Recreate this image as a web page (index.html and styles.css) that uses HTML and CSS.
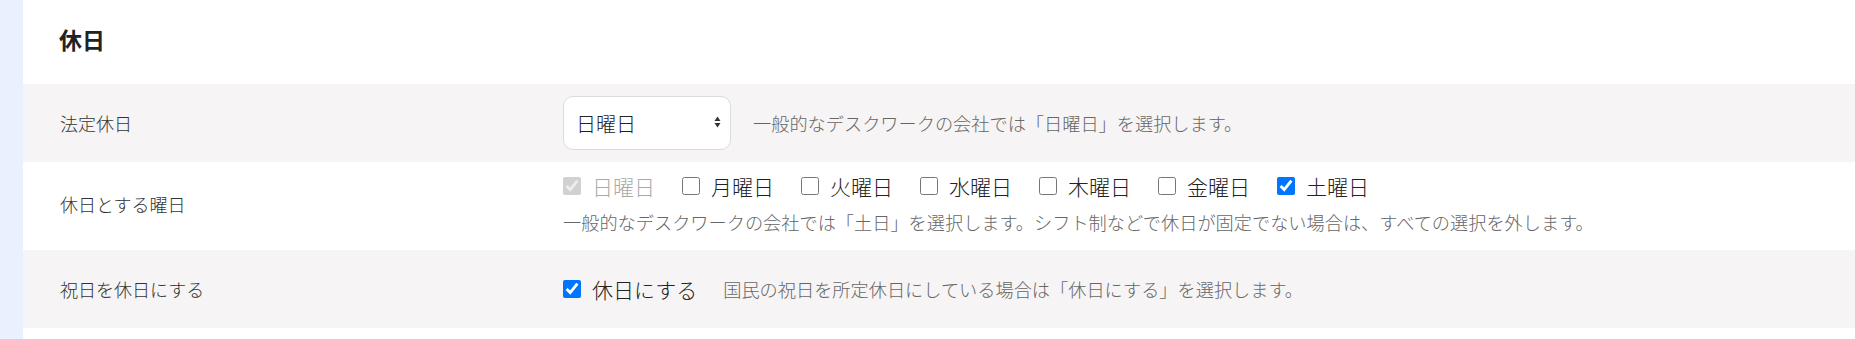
FILE: index.html
```html
<!DOCTYPE html>
<html lang="ja">
<head>
<meta charset="utf-8">
<title>休日</title>
<link rel="stylesheet" href="styles.css">
</head>
<body>
<div class="layout">
  <aside class="side"></aside>
  <main class="main">
    <h2 class="section-title">休日</h2>

    <div class="row row-alt">
      <div class="row-label">法定休日</div>
      <div class="row-control inline">
        <div class="select-wrap">
          <select class="select">
            <option selected>日曜日</option>
            <option>月曜日</option>
            <option>火曜日</option>
            <option>水曜日</option>
            <option>木曜日</option>
            <option>金曜日</option>
            <option>土曜日</option>
          </select>
          <svg class="select-arrows" width="7" height="12" viewBox="0 0 7 12" aria-hidden="true">
            <path d="M3.5 0.5 L6.5 5 L0.5 5 Z" fill="#333"/>
            <path d="M3.5 11.5 L6.5 7 L0.5 7 Z" fill="#333"/>
          </svg>
        </div>
        <span class="help">一般的なデスクワークの会社では「日曜日」を選択します。</span>
      </div>
    </div>

    <div class="row row-tall">
      <div class="row-label">休日とする曜日</div>
      <div class="row-control">
        <div class="checks">
          <label class="check disabled"><input type="checkbox" checked disabled><span>日曜日</span></label>
          <label class="check"><input type="checkbox"><span>月曜日</span></label>
          <label class="check"><input type="checkbox"><span>火曜日</span></label>
          <label class="check"><input type="checkbox"><span>水曜日</span></label>
          <label class="check"><input type="checkbox"><span>木曜日</span></label>
          <label class="check"><input type="checkbox"><span>金曜日</span></label>
          <label class="check"><input type="checkbox" checked><span>土曜日</span></label>
        </div>
        <div class="help help-block">一般的なデスクワークの会社では「土日」を選択します。シフト制などで休日が固定でない場合は、すべての選択を外します。</div>
      </div>
    </div>

    <div class="row row-alt">
      <div class="row-label">祝日を休日にする</div>
      <div class="row-control inline">
        <label class="check"><input type="checkbox" checked><span>休日にする</span></label>
        <span class="help">国民の祝日を所定休日にしている場合は「休日にする」を選択します。</span>
      </div>
    </div>
  </main>
</div>
</body>
</html>
```

FILE: styles.css
```css
html, body {
  margin: 0;
  padding: 0;
  background: #ffffff;
}

body {
  font-family: "Noto Sans CJK JP", "Noto Sans", sans-serif;
  color: #333333;
}

.layout {
  display: flex;
  min-height: 339px;
}

.side {
  width: 23px;
  flex: 0 0 23px;
  background: #e9f1fe;
}

.main {
  flex: 1;
  display: flex;
  flex-direction: column;
}

.section-title {
  margin: 0;
  height: 84px;
  box-sizing: border-box;
  padding: 23px 0 0 36px;
  font-size: 23px;
  line-height: 32px;
  font-weight: 700;
  color: #222222;
}

.row {
  display: grid;
  grid-template-columns: 503px 1fr;
  align-items: center;
  padding-left: 37px;
  min-height: 78px;
  box-sizing: border-box;
}

.row-alt {
  background: #f6f4f4;
}

.row-tall {
  min-height: 88px;
  padding-top: 12px;
  padding-bottom: 14px;
  align-items: start;
}

.row-tall .row-label {
  padding-top: 17px;
}

.row-label {
  font-size: 18px;
  line-height: 26px;
  font-weight: 300;
  color: #333333;
}

.row-control.inline {
  display: flex;
  align-items: center;
  gap: 22px;
}

.select-wrap {
  position: relative;
  width: 168px;
  height: 54px;
}

.select {
  appearance: none;
  -webkit-appearance: none;
  width: 100%;
  height: 100%;
  box-sizing: border-box;
  border: 1px solid #dcdcdc;
  border-radius: 10px;
  background: #ffffff;
  padding: 0 30px 0 12px;
  font-family: "Noto Sans CJK JP", "Noto Sans", sans-serif;
  font-size: 20px;
  font-weight: 300;
  color: #222222;
  outline: none;
}

.select-arrows {
  position: absolute;
  right: 10px;
  top: 20px;
  pointer-events: none;
}

.help {
  font-size: 18.2px;
  line-height: 26px;
  font-weight: 300;
  color: #666666;
}

.help-block {
  display: block;
  margin-top: 11px;
}

.checks {
  display: flex;
  align-items: center;
  gap: 27px;
  height: 24px;
}

.check {
  display: inline-flex;
  align-items: center;
  gap: 11px;
  font-size: 21px;
  line-height: 24px;
  font-weight: 300;
  color: #222222;
}

.check input {
  width: 18px;
  height: 18px;
  margin: 0;
  flex: 0 0 18px;
}

.check.disabled {
  color: #a9a9a9;
}

.row-alt .row-control.inline .check + .help {
  margin-left: 4px;
}
```
